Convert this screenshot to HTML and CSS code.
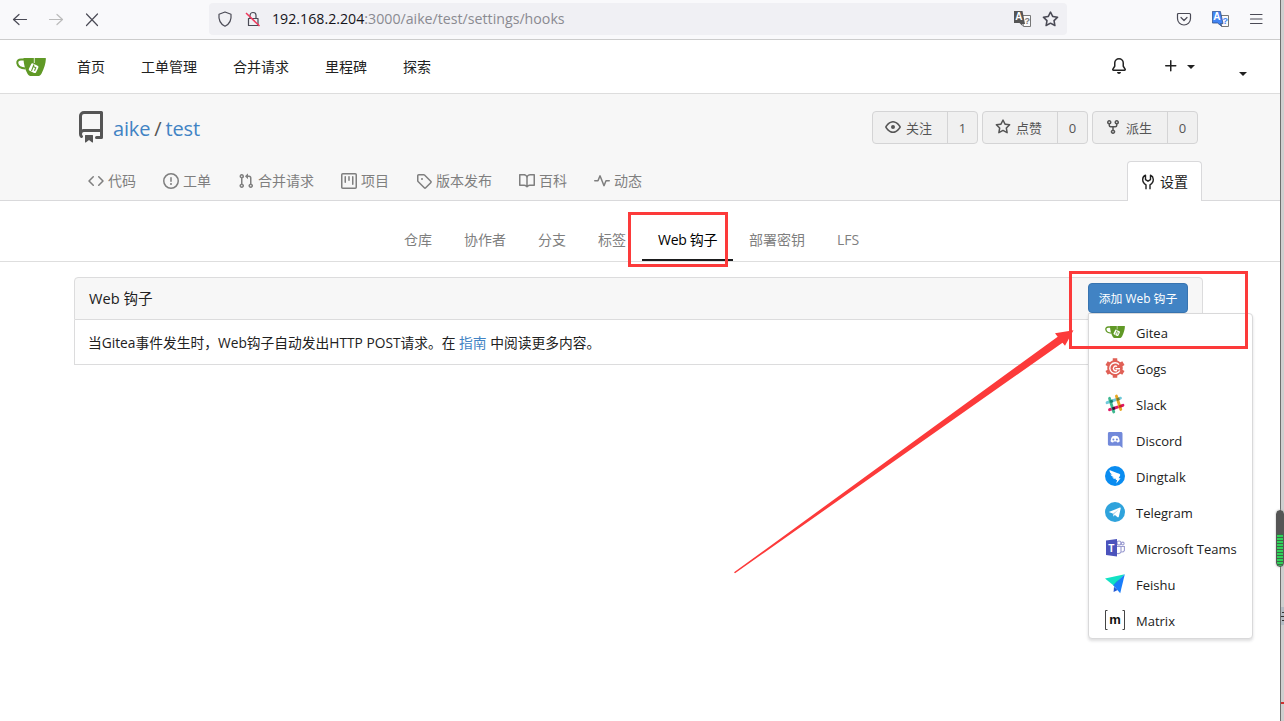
FILE: index.html
```
<!DOCTYPE html>
<html lang="zh-CN">
  <head>
    <meta charset="UTF-8" />
    <meta name="viewport" content="width=device-width, initial-scale=1.0" />
    <title>aike/test - Web 钩子</title>
    <link rel="stylesheet" href="styles.css">
  </head>
  <body>
    <svg class="defs" width="0" height="0">
      <symbol id="gitea" viewBox="0 0 30 20">
        <path fill="none" stroke="#609926" stroke-width="2" d="M10 2.500H5C2.500 2.500 1 4 1.300 6.200C1.800 9.600 4.500 11.300 9.500 11.600" />
        <path fill="#609926" d="M7.500.9h21.800c.5 0 .7.4.6.9-.3 5-1.700 9.600-4.200 14.400-1 1.900-2.200 2.900-4.200 2.900h-6.200c-1.700 0-3-.7-3.800-2.300C9 12.300 7.500 6.500 7.500.9z" />
        <path fill="none" stroke="#fff" stroke-width=".8" d="M18.300 1v5" />
        <rect x="13.600" y="7.200" width="8" height="8" rx="1.500" fill="#fff" transform="rotate(26 17.600 11.200)" />
        <path fill="none" stroke="#609926" stroke-width="1.100" d="M18 7.500l-2.500 6.400M17.300 9.600l2.500 1.200-1.300 3" />
      </symbol>
      <symbol id="star" viewBox="0 0 16 16">
        <path d="M8 .25a.75.75 0 01.673.418l1.882 3.815 4.210.612a.75.75 0 01.416 1.279l-3.046 2.970.719 4.192a.75.75 0 01-1.088.791L8 12.347l-3.766 1.980a.75.75 0 01-1.088-.79l.72-4.194L.818 6.374a.75.75 0 01.416-1.280l4.210-.611L7.327.668A.75.75 0 018 .25zm0 2.445L6.615 5.500a.75.75 0 01-.564.41l-3.097.45 2.240 2.184a.75.75 0 01.216.664l-.528 3.084 2.769-1.456a.75.75 0 01.698 0l2.770 1.456-.53-3.084a.75.75 0 01.216-.664l2.240-2.183-3.096-.45a.75.75 0 01-.564-.41L8 2.694z" />
      </symbol>
    </svg>

    <div class="window">
      <div class="browser">
        <div class="browser-nav">
          <svg width="16" height="16" viewBox="0 0 16 16"><path class="line" d="M14.500 8.500H1.500M7 3.500L1.500 8.500L7 13.500" /></svg>
          <svg class="disabled" width="16" height="16" viewBox="0 0 16 16"><path class="line" d="M1.500 8.500h13M9 3.500L14.500 8.500L9 13.500" /></svg>
          <svg width="16" height="16" viewBox="0 0 16 16"><path class="line" d="M2.500 3l11 11.500M13.500 3L2.500 14.500" /></svg>
        </div>
        <div class="address">
          <svg width="16" height="16" viewBox="0 0 16 16"><path class="line" d="M8 1L14 3.200C14.600 8.500 12.500 13 8 15.200C3.500 13 1.400 8.500 2 3.200z" /></svg>
          <svg class="lock" width="16" height="16" viewBox="0 0 16 16"><path class="line" d="M5 7V4.500a3 3 0 016 0V7M3.500 7.500h9.500v7H3.500z" /><path stroke="#f0385c" stroke-width="1.500" d="M1 2l13.500 13" /></svg>
          <span class="url"><b>192.168.2.204</b>:3000/aike/test/settings/hooks</span>
          <svg width="17" height="16" viewBox="0 0 17 16"><path fill="#fafafa" stroke="#777" d="M7.500 4.500h9v11h-7z" /><path fill="#555" d="M0 0h8.500L11 13H8l1 2.500L5.500 12H0z" /><text class="tr-a" x="1.300" y="9">A</text><text class="tr-q" x="10.500" y="13" fill="#777">?</text></svg>
          <svg class="bookmark" width="17" height="17" fill="#5b5b66"><use href="#star" /></svg>
        </div>
        <div class="browser-tools">
          <svg width="16" height="16" viewBox="0 0 16 16"><path class="line" d="M2.500 2.500h11q1 0 1 1V7.500a6.500 6.500 0 01-13 0V3.500q0-1 1-1zM5 6.500l3 3 3-3" /></svg>
          <svg width="17" height="16" viewBox="0 0 17 16"><path fill="#fafafa" stroke="#777" d="M7.500 4.500h9v11h-7z" /><path fill="#4285f4" stroke="#2f4f8a" stroke-width=".8" d="M.4.4h8L11 12.600H8.500l1 2.500L5.500 12H.4z" /><text class="tr-a" x="1.300" y="9">A</text><text class="tr-q" x="10.500" y="13" fill="#4285f4">?</text></svg>
          <svg width="16" height="16" viewBox="0 0 16 16"><path class="line" d="M1.500 3.500h11.500M1.500 8h11.500M1.500 12.500h11.500" /></svg>
        </div>
      </div>

      <nav class="navbar">
        <svg class="brand" width="30" height="20"><use href="#gitea" /></svg>
        <a>首页</a>
        <a>工单管理</a>
        <a>合并请求</a>
        <a>里程碑</a>
        <a>探索</a>
        <div class="nav-right">
          <svg width="16" height="16" viewBox="0 0 16 16"><path d="M8 16a2 2 0 001.985-1.750c.017-.137-.097-.25-.235-.25h-3.500c-.138 0-.252.113-.235.25A2 2 0 008 16z" /><path fill-rule="evenodd" d="M8 1.500A3.500 3.500 0 004.500 5v2.947c0 .346-.102.683-.294.97L2.500 11.500h11l-1.706-2.583a1.750 1.750 0 01-.294-.97V5A3.500 3.500 0 008 1.500zM3 5a5 5 0 0110 0v2.947c0 .05.015.098.042.139l1.703 2.555A1.518 1.518 0 0113.482 13H2.518a1.518 1.518 0 01-1.263-2.360l1.703-2.554A.25.25 0 003 7.947V5z" /></svg>
          <svg class="plus" width="16" height="16" viewBox="0 0 16 16"><path d="M7.750 2a.75.75 0 01.75.75V7h4.250a.75.75 0 110 1.500H8.500v4.250a.75.75 0 11-1.500 0V8.500H2.750a.75.75 0 010-1.500H7V2.750A.75.75 0 017.750 2z" /></svg>
          <span class="caret"></span>
          <span class="caret user"></span>
        </div>
      </nav>

      <header class="repo">
        <div class="repo-top">
          <svg width="32" height="32" viewBox="0 0 16 16"><path fill-rule="evenodd" d="M2 2.500A2.500 2.500 0 014.500 0h8.750a.75.75 0 01.75.75v12.500a.75.75 0 01-.75.75h-2.500a.75.75 0 110-1.500h1.750v-2h-8a1 1 0 00-.714 1.700.75.75 0 01-1.072 1.050A2.495 2.495 0 012 11.500v-9zm10.500-1V9h-8c-.356 0-.694.074-1 .208V2.500a1 1 0 011-1h8zM5 12.250v3.250a.25.25 0 00.4.2l1.450-1.087a.25.25 0 01.3 0L8.600 15.700a.25.25 0 00.4-.2v-3.250a.25.25 0 00-.25-.25h-3.500a.25.25 0 00-.25.25z" /></svg>
          <div class="repo-name"><a>aike</a><span>/</span><a>test</a></div>
          <div class="repo-buttons">
            <div class="count-btn">
              <span class="act"><svg width="16" height="16" viewBox="0 0 16 16"><path fill-rule="evenodd" d="M1.679 7.932c.412-.621 1.242-1.750 2.366-2.717C5.175 4.242 6.527 3.500 8 3.500c1.473 0 2.824.742 3.955 1.715 1.124.967 1.954 2.096 2.366 2.717a.119.119 0 010 .136c-.412.621-1.242 1.750-2.366 2.717C10.825 11.758 9.473 12.500 8 12.500c-1.473 0-2.824-.742-3.955-1.715C2.920 9.818 2.090 8.690 1.679 8.068a.119.119 0 010-.136zM8 2c-1.981 0-3.670.992-4.933 2.078C1.797 5.169.88 6.423.43 7.100a1.619 1.619 0 000 1.798c.45.678 1.367 1.932 2.637 3.024C4.329 13.008 6.019 14 8 14c1.981 0 3.670-.992 4.933-2.078 1.270-1.091 2.187-2.345 2.637-3.023a1.619 1.619 0 000-1.798c-.45-.678-1.367-1.932-2.637-3.023C11.671 2.992 9.981 2 8 2zm0 8a2 2 0 100-4 2 2 0 000 4z" /></svg>关注</span>
              <span class="num">1</span>
            </div>
            <div class="count-btn">
              <span class="act"><svg width="16" height="16"><use href="#star" /></svg>点赞</span>
              <span class="num">0</span>
            </div>
            <div class="count-btn">
              <span class="act"><svg width="16" height="16" viewBox="0 0 16 16"><path fill-rule="evenodd" d="M5 3.250a.75.75 0 11-1.500 0 .75.75 0 011.500 0zm0 2.122a2.250 2.250 0 10-1.500 0v.878A2.250 2.250 0 005.750 8.500h1.500v2.128a2.251 2.251 0 101.500 0V8.500h1.500a2.250 2.250 0 002.250-2.250v-.878a2.250 2.250 0 10-1.500 0v.878a.75.75 0 01-.75.75h-4.500A.75.75 0 015 6.250v-.878zm3.750 7.378a.75.75 0 11-1.500 0 .75.75 0 011.500 0zm3-8.750a.75.75 0 100-1.500.75.75 0 000 1.500z" /></svg>派生</span>
              <span class="num">0</span>
            </div>
          </div>
        </div>
        <div class="repo-tabs">
          <a><svg width="16" height="16" viewBox="0 0 16 16"><path d="M4.720 3.220a.75.75 0 011.060 1.060L2.060 8l3.720 3.720a.75.75 0 11-1.060 1.060L.47 8.530a.75.75 0 010-1.060l4.250-4.250zm6.560 0a.75.75 0 10-1.060 1.060L13.940 8l-3.720 3.720a.75.75 0 101.060 1.060l4.250-4.250a.75.75 0 000-1.060l-4.250-4.250z" /></svg><span>代码</span></a>
          <a><svg width="16" height="16" viewBox="0 0 16 16"><path fill-rule="evenodd" d="M8 1.500a6.500 6.500 0 100 13 6.500 6.500 0 000-13zM0 8a8 8 0 1116 0A8 8 0 010 8zm9 3a1 1 0 11-2 0 1 1 0 012 0zm-.25-6.250a.75.75 0 00-1.500 0v3.500a.75.75 0 001.500 0v-3.500z" /></svg><span>工单</span></a>
          <a><svg width="16" height="16" viewBox="0 0 16 16"><path fill-rule="evenodd" d="M7.177 3.073L9.573.677A.25.25 0 0110 .854v4.792a.25.25 0 01-.427.177L7.177 3.427a.25.25 0 010-.354zM3.750 2.500a.75.75 0 100 1.500.75.75 0 000-1.500zm-2.250.75a2.250 2.250 0 113 2.122v5.256a2.251 2.251 0 11-1.500 0V5.372A2.250 2.250 0 011.500 3.250zM11 2.500h-1V4h1a1 1 0 011 1v5.628a2.251 2.251 0 101.500 0V5A2.500 2.500 0 0011 2.500zm1 10.250a.75.75 0 111.500 0 .75.75 0 01-1.500 0zM3.750 12a.75.75 0 100 1.500.75.75 0 000-1.500z" /></svg><span>合并请求</span></a>
          <a><svg width="16" height="16" viewBox="0 0 16 16"><path fill-rule="evenodd" d="M1.750 0A1.750 1.750 0 000 1.750v12.500C0 15.216.784 16 1.750 16h12.500A1.750 1.750 0 0016 14.250V1.750A1.750 1.750 0 0014.250 0H1.750zM1.500 1.750a.25.25 0 01.25-.25h12.500a.25.25 0 01.25.25v12.500a.25.25 0 01-.25.25H1.750a.25.25 0 01-.25-.25V1.750zM11.750 3a.75.75 0 00-.75.75v7.500a.75.75 0 001.500 0v-7.500a.75.75 0 00-.75-.75zm-8.250.75a.75.75 0 011.500 0v5.500a.75.75 0 01-1.500 0v-5.500zM8 3a.75.75 0 00-.75.75v3.500a.75.75 0 001.500 0v-3.500A.75.75 0 008 3z" /></svg><span>项目</span></a>
          <a><svg width="16" height="16" viewBox="0 0 16 16"><path fill-rule="evenodd" d="M2.500 7.775V2.750a.25.25 0 01.25-.25h5.025a.25.25 0 01.177.073l6.250 6.250a.25.25 0 010 .354l-5.025 5.025a.25.25 0 01-.354 0l-6.250-6.250a.25.25 0 01-.073-.177zm-1.500 0V2.750C1 1.784 1.784 1 2.750 1h5.025c.464 0 .91.184 1.238.513l6.250 6.250a1.750 1.750 0 010 2.474l-5.026 5.026a1.750 1.750 0 01-2.474 0l-6.250-6.250A1.750 1.750 0 011 7.775zM6 5a1 1 0 100 2 1 1 0 000-2z" /></svg><span>版本发布</span></a>
          <a><svg width="16" height="16" viewBox="0 0 16 16"><path fill-rule="evenodd" d="M0 1.750A.75.75 0 01.75 1h4.253c1.227 0 2.317.59 3 1.501A3.744 3.744 0 0111.006 1h4.245a.75.75 0 01.75.75v10.500a.75.75 0 01-.75.75h-4.507a2.250 2.250 0 00-1.591.659l-.622.621a.75.75 0 01-1.060 0l-.622-.621A2.250 2.250 0 005.258 13H.75a.75.75 0 01-.75-.75V1.750zm8.755 3a2.250 2.250 0 012.250-2.250H14.500v9h-3.757c-.71 0-1.400.201-1.992.572l.004-7.322zm-1.504 7.324l.004-5.073-.002-2.253A2.250 2.250 0 005.003 2.500H1.500v9h3.757a3.750 3.750 0 011.994.574z" /></svg><span>百科</span></a>
          <a><svg width="16" height="16" viewBox="0 0 16 16"><path d="M6 2a.75.75 0 01.696.471L10 10.731l1.304-3.260A.75.75 0 0112 7h3.250a.75.75 0 010 1.500h-2.742l-1.812 4.528a.75.75 0 01-1.392 0L6 4.770 4.696 8.030A.75.75 0 014 8.500H.75a.75.75 0 010-1.500h2.742l1.812-4.529A.75.75 0 016 2z" /></svg><span>动态</span></a>
          <a class="active"><svg width="16" height="16" viewBox="0 0 16 16"><path fill="none" stroke="currentColor" stroke-width="1.400" stroke-linejoin="round" d="M6 15.200V10.800C3.700 9.500 2.600 7.500 2.700 5.200C2.800 3.300 3.800 2 5.500 1.200V5.600L8 7.200l2.500-1.600V1.200C12.200 2 13.200 3.300 13.300 5.200C13.400 7.500 12.300 9.500 10 10.800V15.200" /></svg><span>设置</span></a>
        </div>
      </header>

      <div class="settings-nav">
        <a>仓库</a>
        <a>协作者</a>
        <a>分支</a>
        <a>标签</a>
        <a class="active">Web 钩子</a>
        <a>部署密钥</a>
        <a>LFS</a>
      </div>

      <main class="panel">
        <div class="panel-head">
          <span>Web 钩子</span>
          <div class="dropdown">
            <button>添加 Web 钩子</button>
            <div class="menu">
              <a><svg width="20" height="20"><use href="#gitea" /></svg>Gitea</a>
              <a><svg width="20" height="20" viewBox="0 0 20 20"><circle cx="10" cy="10" r="7.800" fill="#e06056" /><path fill="none" stroke="#e06056" stroke-width="4.500" d="M10 .3v19.400M1.600 5.150l16.800 9.700M1.600 14.850l16.800-9.700" /><path fill="none" stroke="#fff" stroke-width="1.400" d="M14 6.500a5.300 5.300 0 10.800 6M15 10.800h-4.500M12 8.500a2.300 2.300 0 100 3.800" /></svg>Gogs</a>
              <a><svg width="20" height="20" viewBox="0 0 20 20"><g fill="none" stroke-width="2.800" stroke-linecap="round"><path stroke="#70cadb" d="M2 8.700L15.500 4.200" /><path stroke="#e01765" d="M4.500 15.700L18 11.300" /><path stroke="#3eb890" d="M4.500 4.300L8.800 18" /><path stroke="#e8a723" d="M11.400 2L15.800 15.500" /></g><g><path fill="#14806b" d="M4.700 6.500l2.700-.9.8 2.600-2.700.9z" /><path fill="#7c7a2e" d="M11.400 4.300l2.700-.9.8 2.600-2.700.9z" /><path fill="#361238" d="M6.900 13.600l2.700-.9.8 2.600-2.700.9z" /><path fill="#cc2027" d="M13.700 11.400l2.700-.9.8 2.600-2.700.9z" /></g></svg>Slack</a>
              <a><svg width="20" height="20" viewBox="0 0 20 20"><path fill="#7289da" d="M4.500 2h11.300c1 0 1.700.7 1.700 1.700V18l-2.800-2.200H4.500c-1 0-1.600-.7-1.600-1.700V3.700C2.900 2.700 3.500 2 4.500 2z" /><path fill="#fff" d="M7.500 6.200q2.600-.7 5.200 0 2 1.500 2.100 5-1 1.200-2.500 1.200l-.7-.9H8.800l-.7.9q-1.600 0-2.600-1.200.2-3.500 2-5z" /><circle cx="8.400" cy="9.500" r="1" fill="#7289da" /><circle cx="11.900" cy="9.500" r="1" fill="#7289da" /></svg>Discord</a>
              <a><svg width="20" height="20" viewBox="0 0 20 20"><circle cx="10" cy="10" r="10" fill="#0a8cf0" /><path fill="#fff" d="M4.500 4c3 1.500 7 2.600 9.800 3.800 1 .5 1.100 1 .7 1.900l-1.400 2.600h2l-4.300 5.200.8-3.500h-1.500l.5-1.200c-2 .3-3.200-.5-3.700-1.600l2 0C7 10.600 5.800 9.600 5.600 8.300l1.800.5C5.500 7.600 4.500 6 4.500 4z" /></svg>Dingtalk</a>
              <a><svg width="20" height="20" viewBox="0 0 20 20"><circle cx="10" cy="10" r="10" fill="#2fa3dc" /><path fill="#fff" d="M3.700 10l11.200-4.400c.6-.2 1 .1.8.9l-1.900 8.200c-.1.7-.6.8-1.200.5l-2.700-2.100-1.500 1.500-.6-3.200z" /><path fill="#b8d5e8" d="M7.800 11.400L13.700 7.500 9.300 12l-.9 2.600z" /></svg>Telegram</a>
              <a><svg width="20" height="20" viewBox="0 0 20 20"><g fill="none" stroke="#9a9bd0" stroke-width="1.100"><circle cx="14" cy="5" r="2" /><circle cx="17.700" cy="5.500" r="1.400" /><path d="M12 8.500h4v5.500q-1 2-4 1.500M16.500 8.500h2.900v4q-.7 1.600-2.900 1.500" /></g><path fill="#4b53bc" d="M1 2.500L12 .9v17.700L1 16.900z" /><text class="teams-t" x="3.200" y="13.500">T</text></svg>Microsoft Teams</a>
              <a><svg width="20" height="20" viewBox="0 0 20 20"><path fill="#12e2c4" d="M0 4.400L19.800.3 11.800 8.700 8.300 11.300z" /><path fill="#08baa9" d="M8.300 11.300l3.500-4.200 3.200-1.500-5.500 7.200z" /><path fill="#1a7dfa" d="M19.800.3L15.200 19.300 8.300 11.300z" /><path fill="#2458d2" d="M9 12.800l3.600 3.200-4 2z" /></svg>Feishu</a>
              <a><svg width="20" height="20" viewBox="0 0 20 20"><path fill="none" stroke="#444" d="M2.500.5h-2v19h2M17.500.5h2v19h-2" /><text class="matrix-m" x="4.300" y="13.600">m</text></svg>Matrix</a>
            </div>
          </div>
        </div>
        <div class="panel-body">当Gitea事件发生时，Web钩子自动发出HTTP POST请求。在 <a>指南</a> 中阅读更多内容。</div>
      </main>
    </div>

    <!-- strip of the window behind -->
    <div class="edge">
      <span class="edge-row"></span>
      <span class="edge-mark"></span>
    </div>
    <div class="meter"></div>

    <svg class="marks" width="1284" height="721">
      <rect x="629.5" y="213.5" width="97" height="52" />
      <rect x="1070.5" y="272.5" width="176" height="75" />
      <path d="M734 572.300L1057.700 336.700 1055 333.300 1073.500 330.300 1065 345.700 1062.500 342.700 735 573.200z" />
    </svg>
  </body>
</html>
```
FILE: styles.css
```
* {
  box-sizing: border-box;
}
body {
  margin: 0;
  height: 721px;
  display: flex;
  position: relative;
  overflow: hidden;
  font-family: "Open Sans", "Noto Sans CJK SC", sans-serif;
  font-size: 14px;
  color: #212121;
  background: #fff;
}
svg {
  fill: currentColor;
  flex-shrink: 0;
}
.defs {
  position: absolute;
}
.line {
  fill: none;
  stroke: currentColor;
  stroke-width: 1.2;
  stroke-linecap: round;
  stroke-linejoin: round;
}
.window {
  width: 1280px;
}

/* browser toolbar */
.browser {
  height: 40px;
  padding-bottom: 1px;
  display: flex;
  align-items: center;
  background: #f9f9fb;
  border-bottom: 1px solid #ccc;
  color: #4a4a55;
}
.browser-nav {
  width: 209px;
  padding-left: 12px;
  display: flex;
  gap: 20px;
}
.disabled {
  color: #bbb;
}
.address {
  width: 858px;
  height: 32px;
  padding: 0 8px;
  display: flex;
  align-items: center;
  background: #f0f0f4;
  border-radius: 4px;
}
.lock {
  margin-left: 12px;
}
.url {
  flex: 1;
  margin-left: 11px;
  padding-bottom: 2px;
  font-size: 14.2px;
  color: #8a8a91;
}
.url b {
  font-weight: 400;
  color: #15141a;
}
.bookmark {
  margin-left: 11px;
}
.browser-tools {
  margin-left: 109px;
  display: flex;
  gap: 20px;
}
.tr-a {
  font: bold 10px "Liberation Sans", sans-serif;
  fill: #fff;
}
.tr-q {
  font: bold 9px "Liberation Sans", sans-serif;
}

/* top menu */
.navbar {
  height: 54px;
  padding: 0 0 1px 16px;
  display: flex;
  align-items: center;
  gap: 36px;
  border-bottom: 1px solid #ddd;
}
.brand {
  margin: 1px -5px 0 0;
}
.nav-right {
  margin-left: auto;
  padding-right: 33px;
  display: flex;
  align-items: center;
}
.plus {
  margin-left: 36px;
}
.caret {
  margin: 1px 0 0 8px;
  border: 4px solid transparent;
  border-top-color: #212121;
  border-bottom: 0;
}
.caret.user {
  margin-left: 44px;
  margin-top: 15px;
}

/* repository header */
.repo {
  height: 107px;
  padding: 17px 78px 0 75px;
  background: #f7f7f7;
  border-bottom: 1px solid #d9d9db;
}
.repo-top {
  height: 50px;
  display: flex;
  align-items: flex-start;
  color: #555;
}
.repo-name {
  margin-left: 6px;
  display: flex;
  gap: 4px;
  font-size: 20px;
  letter-spacing: -0.15px;
  line-height: 35px;
}
a {
  color: inherit;
}
.repo-name a,
.panel-body a {
  color: #4183c4;
}
.repo-buttons {
  margin-left: auto;
  margin-right: 4px;
  display: flex;
  gap: 4px;
}
.count-btn {
  width: 106px;
  height: 33px;
  display: flex;
  border: 1px solid #d4d4d5;
  border-radius: 4px;
  background: #f0f0f0;
  font-size: 13px;
}
.act {
  width: 75px;
  padding-left: 12px;
  display: flex;
  align-items: center;
  gap: 5px;
  border-right: 1px solid #d4d4d5;
}
.act svg {
  margin-bottom: 2px;
}
.num {
  flex: 1;
  text-align: center;
  line-height: 32px;
}
.repo-tabs {
  height: 40px;
  display: flex;
  align-items: center;
  gap: 27px;
  padding-left: 13px;
  color: #7f7f7f;
}
.repo-tabs a {
  display: flex;
  align-items: center;
  gap: 4px;
}
.repo-tabs span {
  padding-bottom: 2px;
}
.repo-tabs .active {
  width: 75px;
  height: 40px;
  margin-left: auto;
  padding-left: 12px;
  gap: 4px;
  color: #212121;
  background: #fff;
  border: 1px solid #d9d9db;
  border-bottom: 0;
  border-radius: 4px 4px 0 0;
}

/* settings menu */
.settings-nav {
  height: 61px;
  padding: 17px 0 0 388px;
  display: flex;
  border-bottom: 1px solid #dedede;
  color: #7f7f7f;
}
.settings-nav a {
  padding: 0 16px;
  line-height: 43px;
}
.settings-nav .active {
  width: 91px;
  white-space: nowrap;
  letter-spacing: -0.3px;
  color: #000;
  border-bottom: 2px solid #1b1c1d;
}

.panel {
  width: 1129px;
  margin: 15px 0 0 74px;
}
.panel-head {
  height: 43px;
  padding: 0 14px 2px;
  display: flex;
  align-items: center;
  justify-content: space-between;
  font-size: 14.6px;
  background: #f7f7f7;
  border: 1px solid #dcdcdd;
  border-radius: 4px 4px 0 0;
}
.panel-body {
  height: 45px;
  padding-left: 13px;
  line-height: 46px;
  font-size: 13.75px;
  border: 1px solid #dcdcdd;
  border-top: 0;
}
.dropdown {
  position: relative;
}
.dropdown button {
  display: block;
  width: 100px;
  height: 30px;
  padding: 0;
  font-family: inherit;
  font-size: 11.9px;
  color: #fff;
  background: #4183c4;
  border: 1px solid #3874b0;
  border-radius: 4px;
}
.menu {
  position: absolute;
  top: 30px;
  left: 0;
  width: 165px;
  height: 326px;
  padding-top: 1px;
  background: #fff;
  border: 1px solid #d9d9da;
  border-radius: 0 4px 4px 4px;
  box-shadow: 0 2px 3px rgba(34, 36, 38, 0.15);
}
.menu a {
  height: 36px;
  padding-left: 16px;
  display: flex;
  align-items: center;
  gap: 11px;
  font-size: 13px;
  white-space: nowrap;
}
.menu svg {
  margin-bottom: 2px;
}
.teams-t {
  font: bold 10px "Liberation Sans", sans-serif;
  fill: #fff;
}
.matrix-m {
  font: bold 13px "Liberation Sans", sans-serif;
  fill: #111;
}

/* right edge */
.edge {
  width: 4px;
  overflow: hidden;
  background: #cfcfcf;
  border-left: 1px solid #6e6e6e;
}
.edge-row {
  display: block;
  height: 18px;
  margin-top: 607px;
  background: linear-gradient(#333, #333) 1px 5px / 2px 1px no-repeat,
    linear-gradient(#333, #333) 0 9px / 3px 1px no-repeat,
    linear-gradient(#333, #333) 1px 13px / 2px 1px no-repeat, #b4bcc4;
}
.edge-mark {
  display: block;
  height: 2px;
  margin-top: 77px;
  background: #d03030;
}
.meter {
  position: absolute;
  left: 1276px;
  top: 510px;
  width: 8px;
  height: 57px;
  border-radius: 4px;
  border: 1px solid #555;
  background: linear-gradient(#555 23px, transparent 23px),
    repeating-linear-gradient(#2fd159 0 2px, #3b6b46 2px 3px);
  box-shadow: 0 0 2px #aaa;
}

/* red callouts */
.marks {
  position: absolute;
  left: 0;
  top: 0;
  fill: #fc3a3a;
}
.marks rect {
  fill: none;
  stroke: #fc3a3a;
  stroke-width: 3;
}
```
